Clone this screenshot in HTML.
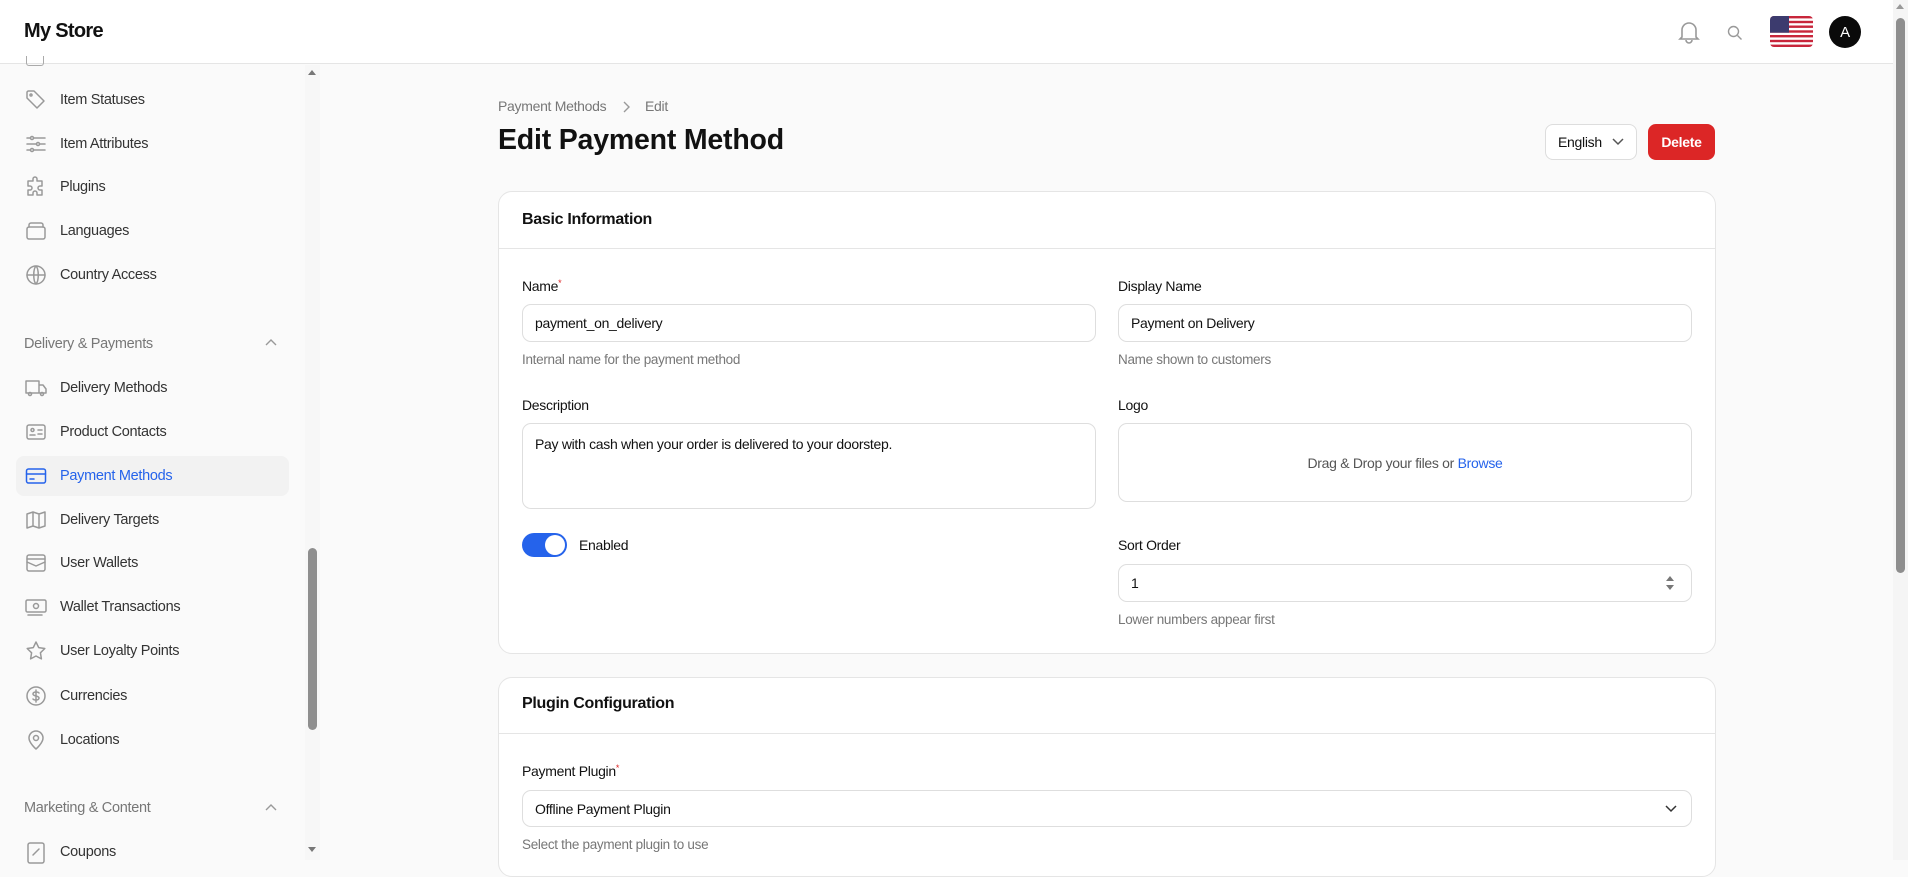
<!DOCTYPE html>
<html><head><meta charset="utf-8"><style>
*{box-sizing:border-box;margin:0;padding:0}
body{width:1908px;height:860px;overflow:hidden;background:#fafafa;font-family:"Liberation Sans",sans-serif;color:#111;position:relative;font-size:14px;letter-spacing:-0.3px}
.a{position:absolute}
.hdr{left:0;top:0;width:1893px;height:64px;background:#fff;border-bottom:1px solid #e5e5e5}
.nav{left:24px;font-size:14.5px;color:#333;display:flex;align-items:center;height:40px;width:265px}
.nav svg{width:24px;height:24px;margin-right:12px;fill:none;stroke:#999;stroke-width:1.5;stroke-linecap:round;stroke-linejoin:round}
.sec{left:24px;font-size:14.5px;color:#777}
.card{background:#fff;border:1px solid #e5e5e5;border-radius:14px;left:498px;width:1218px}
.lbl{font-size:14px;color:#111}
.in{background:#fff;border:1px solid #dedede;border-radius:9px;font-size:14px;padding-left:12px;display:flex;align-items:center}
.help{font-size:13.5px;color:#777}
.req{color:#dc2626;font-size:9px;vertical-align:top}
</style></head><body>
<div class="a hdr"></div>
<div class="a" style="left:24px;top:20px;font-size:20px;font-weight:bold;letter-spacing:-0.7px">My Store</div>
<svg class="a" style="left:1678px;top:19px" width="22" height="26" viewBox="0 0 22 26" fill="none" stroke="#999" stroke-width="1.6"><path d="M4 18V11a7 7 0 0 1 14 0v7l2 2H2z"/><path d="M8 21a3 3 0 0 0 6 0"/></svg>
<svg class="a" style="left:1727px;top:25px" width="16" height="16" viewBox="0 0 16 16" fill="none" stroke="#999" stroke-width="1.4"><circle cx="6.5" cy="6.5" r="5"/><path d="M10.5 10.5l4 4"/></svg>
<svg class="a" style="left:1770px;top:16px;border-radius:4px" width="43" height="31" viewBox="0 0 43 31"><rect width="43" height="31" fill="#fff"/><g fill="#c8263b"><rect y="0" width="43" height="2.4"/><rect y="4.8" width="43" height="2.4"/><rect y="9.5" width="43" height="2.4"/><rect y="14.3" width="43" height="2.4"/><rect y="19" width="43" height="2.4"/><rect y="23.8" width="43" height="2.4"/><rect y="28.6" width="43" height="2.4"/></g><rect width="19" height="16.7" fill="#3c3b6e"/></svg>
<div class="a" style="left:1829px;top:16px;width:32px;height:32px;border-radius:50%;background:#0a0a0a;color:#fff;font-size:15px;display:flex;align-items:center;justify-content:center">A</div>
<div class="a" style="left:1893px;top:0;width:15px;height:860px;background:#f5f5f5"></div>
<div class="a" style="left:1896px;top:18px;width:9px;height:555px;background:#8e8e8e;border-radius:5px"></div>
<div class="a" style="left:1896px;top:4px;width:0;height:0;border-left:4.5px solid transparent;border-right:4.5px solid transparent;border-bottom:5px solid #999"></div>
<div class="a" style="left:0;top:65px;width:320px;height:795px;background:#fafafa;overflow:hidden"></div>
<div class="a" style="left:305px;top:65px;width:15px;height:795px;background:#f7f7f7"></div>
<div class="a" style="left:308px;top:548px;width:9px;height:182px;background:#8e8e8e;border-radius:5px"></div>
<div class="a" style="left:308px;top:70px;border-left:4.5px solid transparent;border-right:4.5px solid transparent;border-bottom:5px solid #777"></div>
<div class="a" style="left:308px;top:847px;border-left:4.5px solid transparent;border-right:4.5px solid transparent;border-top:5px solid #777"></div>
<div class="a" style="left:26px;top:56px;width:18px;height:10px;border:1.5px solid #aaa;border-top:none;border-radius:0 0 3px 3px"></div>
<div class="a nav" style="top:80px"><svg viewBox="0 0 24 24"><path d="M3 4v6l10 10 7-7L10 3H4z"/><circle cx="7" cy="7" r="1"/></svg>Item Statuses</div>
<div class="a nav" style="top:124px"><svg viewBox="0 0 24 24"><path d="M3 6h18M3 12h18M3 18h18"/><circle cx="8" cy="6" r="1.5" fill="#fafafa"/><circle cx="14" cy="12" r="1.5" fill="#fafafa"/><circle cx="8" cy="18" r="1.5" fill="#fafafa"/></svg>Item Attributes</div>
<div class="a nav" style="top:167px"><svg viewBox="0 0 24 24"><path d="M9 4a2 2 0 0 1 4 0v2h5v5h-2a2 2 0 0 0 0 4h2v5h-5v-2a2 2 0 0 0-4 0v2H4v-5h2a2 2 0 0 0 0-4H4V6h5z"/></svg>Plugins</div>
<div class="a nav" style="top:211px"><svg viewBox="0 0 24 24"><rect x="3" y="8" width="18" height="12" rx="2"/><path d="M5 8V6a2 2 0 0 1 2-2h10a2 2 0 0 1 2 2v2"/></svg>Languages</div>
<div class="a nav" style="top:255px"><svg viewBox="0 0 24 24"><circle cx="12" cy="12" r="9"/><path d="M3 12h18M12 3c3 3 3 15 0 18M12 3c-3 3-3 15 0 18"/></svg>Country Access</div>
<div class="a sec" style="top:336px">Delivery &amp; Payments</div>
<svg class="a" style="left:265px;top:338px" width="12" height="8" viewBox="0 0 12 8" fill="none" stroke="#999" stroke-width="1.4"><path d="M1 7l5-5 5 5"/></svg>
<div class="a nav" style="top:368px"><svg viewBox="0 0 24 24"><path d="M2 5h13v12H2zM15 9h4l3 4v4h-7"/><circle cx="6" cy="18" r="1.5"/><circle cx="18" cy="18" r="1.5"/></svg>Delivery Methods</div>
<div class="a nav" style="top:412px"><svg viewBox="0 0 24 24"><rect x="3" y="5" width="18" height="14" rx="2"/><circle cx="8.5" cy="10" r="1.5"/><path d="M6 15h5M14 10h4M14 14h4"/></svg>Product Contacts</div>
<div class="a" style="left:16px;top:456px;width:273px;height:40px;background:#f2f2f2;border-radius:8px"></div>
<div class="a nav" style="top:456px;color:#2563eb"><svg viewBox="0 0 24 24" style="stroke:#2563eb"><rect x="2.5" y="5" width="19" height="14" rx="2"/><path d="M2.5 10h19M6 15h4"/></svg>Payment Methods</div>
<div class="a nav" style="top:500px"><svg viewBox="0 0 24 24"><path d="M3 6l6-2 6 2 6-2v14l-6 2-6-2-6 2z M9 4v14M15 6v14"/></svg>Delivery Targets</div>
<div class="a nav" style="top:543px"><svg viewBox="0 0 24 24"><rect x="3" y="4" width="18" height="16" rx="2"/><path d="M3 8h18M3 11l9 4 9-4"/></svg>User Wallets</div>
<div class="a nav" style="top:587px"><svg viewBox="0 0 24 24"><rect x="2" y="5" width="20" height="12" rx="1.5"/><circle cx="12" cy="11" r="2.5"/><path d="M4 20h14"/></svg>Wallet Transactions</div>
<div class="a nav" style="top:631px"><svg viewBox="0 0 24 24"><path d="M12 3l2.7 5.6 6.1.9-4.4 4.3 1 6.1L12 17l-5.4 2.9 1-6.1L3.2 9.5l6.1-.9z"/></svg>User Loyalty Points</div>
<div class="a nav" style="top:676px"><svg viewBox="0 0 24 24"><circle cx="12" cy="12" r="9"/><path d="M15 9c-1-1.5-6-1.5-6 1s6 1.5 6 4-5 2.5-6 1M12 6v12"/></svg>Currencies</div>
<div class="a nav" style="top:720px"><svg viewBox="0 0 24 24"><path d="M12 21s-7-6-7-11a7 7 0 0 1 14 0c0 5-7 11-7 11z"/><circle cx="12" cy="10" r="2.5"/></svg>Locations</div>
<div class="a sec" style="top:800px">Marketing &amp; Content</div>
<svg class="a" style="left:265px;top:803px" width="12" height="8" viewBox="0 0 12 8" fill="none" stroke="#999" stroke-width="1.4"><path d="M1 7l5-5 5 5"/></svg>
<div class="a nav" style="top:832px"><svg viewBox="0 0 24 24"><rect x="4" y="3" width="16" height="20" rx="2"/><path d="M9 15l6-6"/></svg>Coupons</div>
<div class="a" style="left:498px;top:98px;font-size:14px;color:#777">Payment Methods</div>
<svg class="a" style="left:622px;top:101px" width="8" height="12" viewBox="0 0 8 12" fill="none" stroke="#999" stroke-width="1.4"><path d="M2 1l5 5-5 5"/></svg>
<div class="a" style="left:645px;top:98px;font-size:14px;color:#777">Edit</div>
<div class="a" style="left:498px;top:124px;font-size:28.5px;font-weight:bold;letter-spacing:-0.2px">Edit Payment Method</div>
<div class="a" style="left:1545px;top:124px;width:92px;height:36px;background:#fff;border:1px solid #ddd;border-radius:8px;font-size:14px;display:flex;align-items:center;padding-left:12px">English<svg style="margin-left:10px" width="12" height="8" viewBox="0 0 12 8" fill="none" stroke="#555" stroke-width="1.5"><path d="M1 1l5 5 5-5"/></svg></div>
<div class="a" style="left:1648px;top:124px;width:67px;height:36px;background:#dc2626;border-radius:8px;color:#fff;font-weight:bold;font-size:14px;display:flex;align-items:center;justify-content:center">Delete</div>
<div class="a card" style="top:191px;height:463px"></div>
<div class="a" style="left:498px;top:248px;width:1218px;height:1px;background:#e5e5e5"></div>
<div class="a" style="left:522px;top:211px;font-size:16px;font-weight:bold">Basic Information</div>
<div class="a lbl" style="left:522px;top:278px">Name<span class="req">*</span></div>
<div class="a in" style="left:522px;top:304px;width:574px;height:38px">payment_on_delivery</div>
<div class="a help" style="left:522px;top:352px">Internal name for the payment method</div>
<div class="a lbl" style="left:1118px;top:278px">Display Name</div>
<div class="a in" style="left:1118px;top:304px;width:574px;height:38px">Payment on Delivery</div>
<div class="a help" style="left:1118px;top:352px">Name shown to customers</div>
<div class="a lbl" style="left:522px;top:397px">Description</div>
<div class="a in" style="left:522px;top:423px;width:574px;height:86px;align-items:flex-start;padding-top:12px">Pay with cash when your order is delivered to your doorstep.</div>
<div class="a lbl" style="left:1118px;top:397px">Logo</div>
<div class="a in" style="left:1118px;top:423px;width:574px;height:79px;justify-content:center;padding:0;color:#555">Drag &amp; Drop your files or&nbsp;<span style="color:#2563eb">Browse</span></div>
<div class="a" style="left:522px;top:533px;width:45px;height:24px;background:#2563eb;border-radius:12px"></div>
<div class="a" style="left:545px;top:535px;width:20px;height:20px;background:#fff;border-radius:50%"></div>
<div class="a lbl" style="left:579px;top:537px">Enabled</div>
<div class="a lbl" style="left:1118px;top:537px">Sort Order</div>
<div class="a in" style="left:1118px;top:564px;width:574px;height:38px">1</div>
<svg class="a" style="left:1665px;top:573px" width="10" height="20" viewBox="0 0 10 20" fill="#777"><path d="M1 8l4-5 4 5zM1 12l4 5 4-5z"/></svg>
<div class="a help" style="left:1118px;top:612px">Lower numbers appear first</div>
<div class="a card" style="top:677px;height:200px"></div>
<div class="a" style="left:498px;top:733px;width:1218px;height:1px;background:#e5e5e5"></div>
<div class="a" style="left:522px;top:695px;font-size:16px;font-weight:bold">Plugin Configuration</div>
<div class="a lbl" style="left:522px;top:763px">Payment Plugin<span class="req">*</span></div>
<div class="a in" style="left:522px;top:790px;width:1170px;height:37px">Offline Payment Plugin</div>
<svg class="a" style="left:1665px;top:805px" width="12" height="8" viewBox="0 0 12 8" fill="none" stroke="#333" stroke-width="1.5"><path d="M1 1l5 5 5-5"/></svg>
<div class="a help" style="left:522px;top:837px">Select the payment plugin to use</div>
</body></html>
